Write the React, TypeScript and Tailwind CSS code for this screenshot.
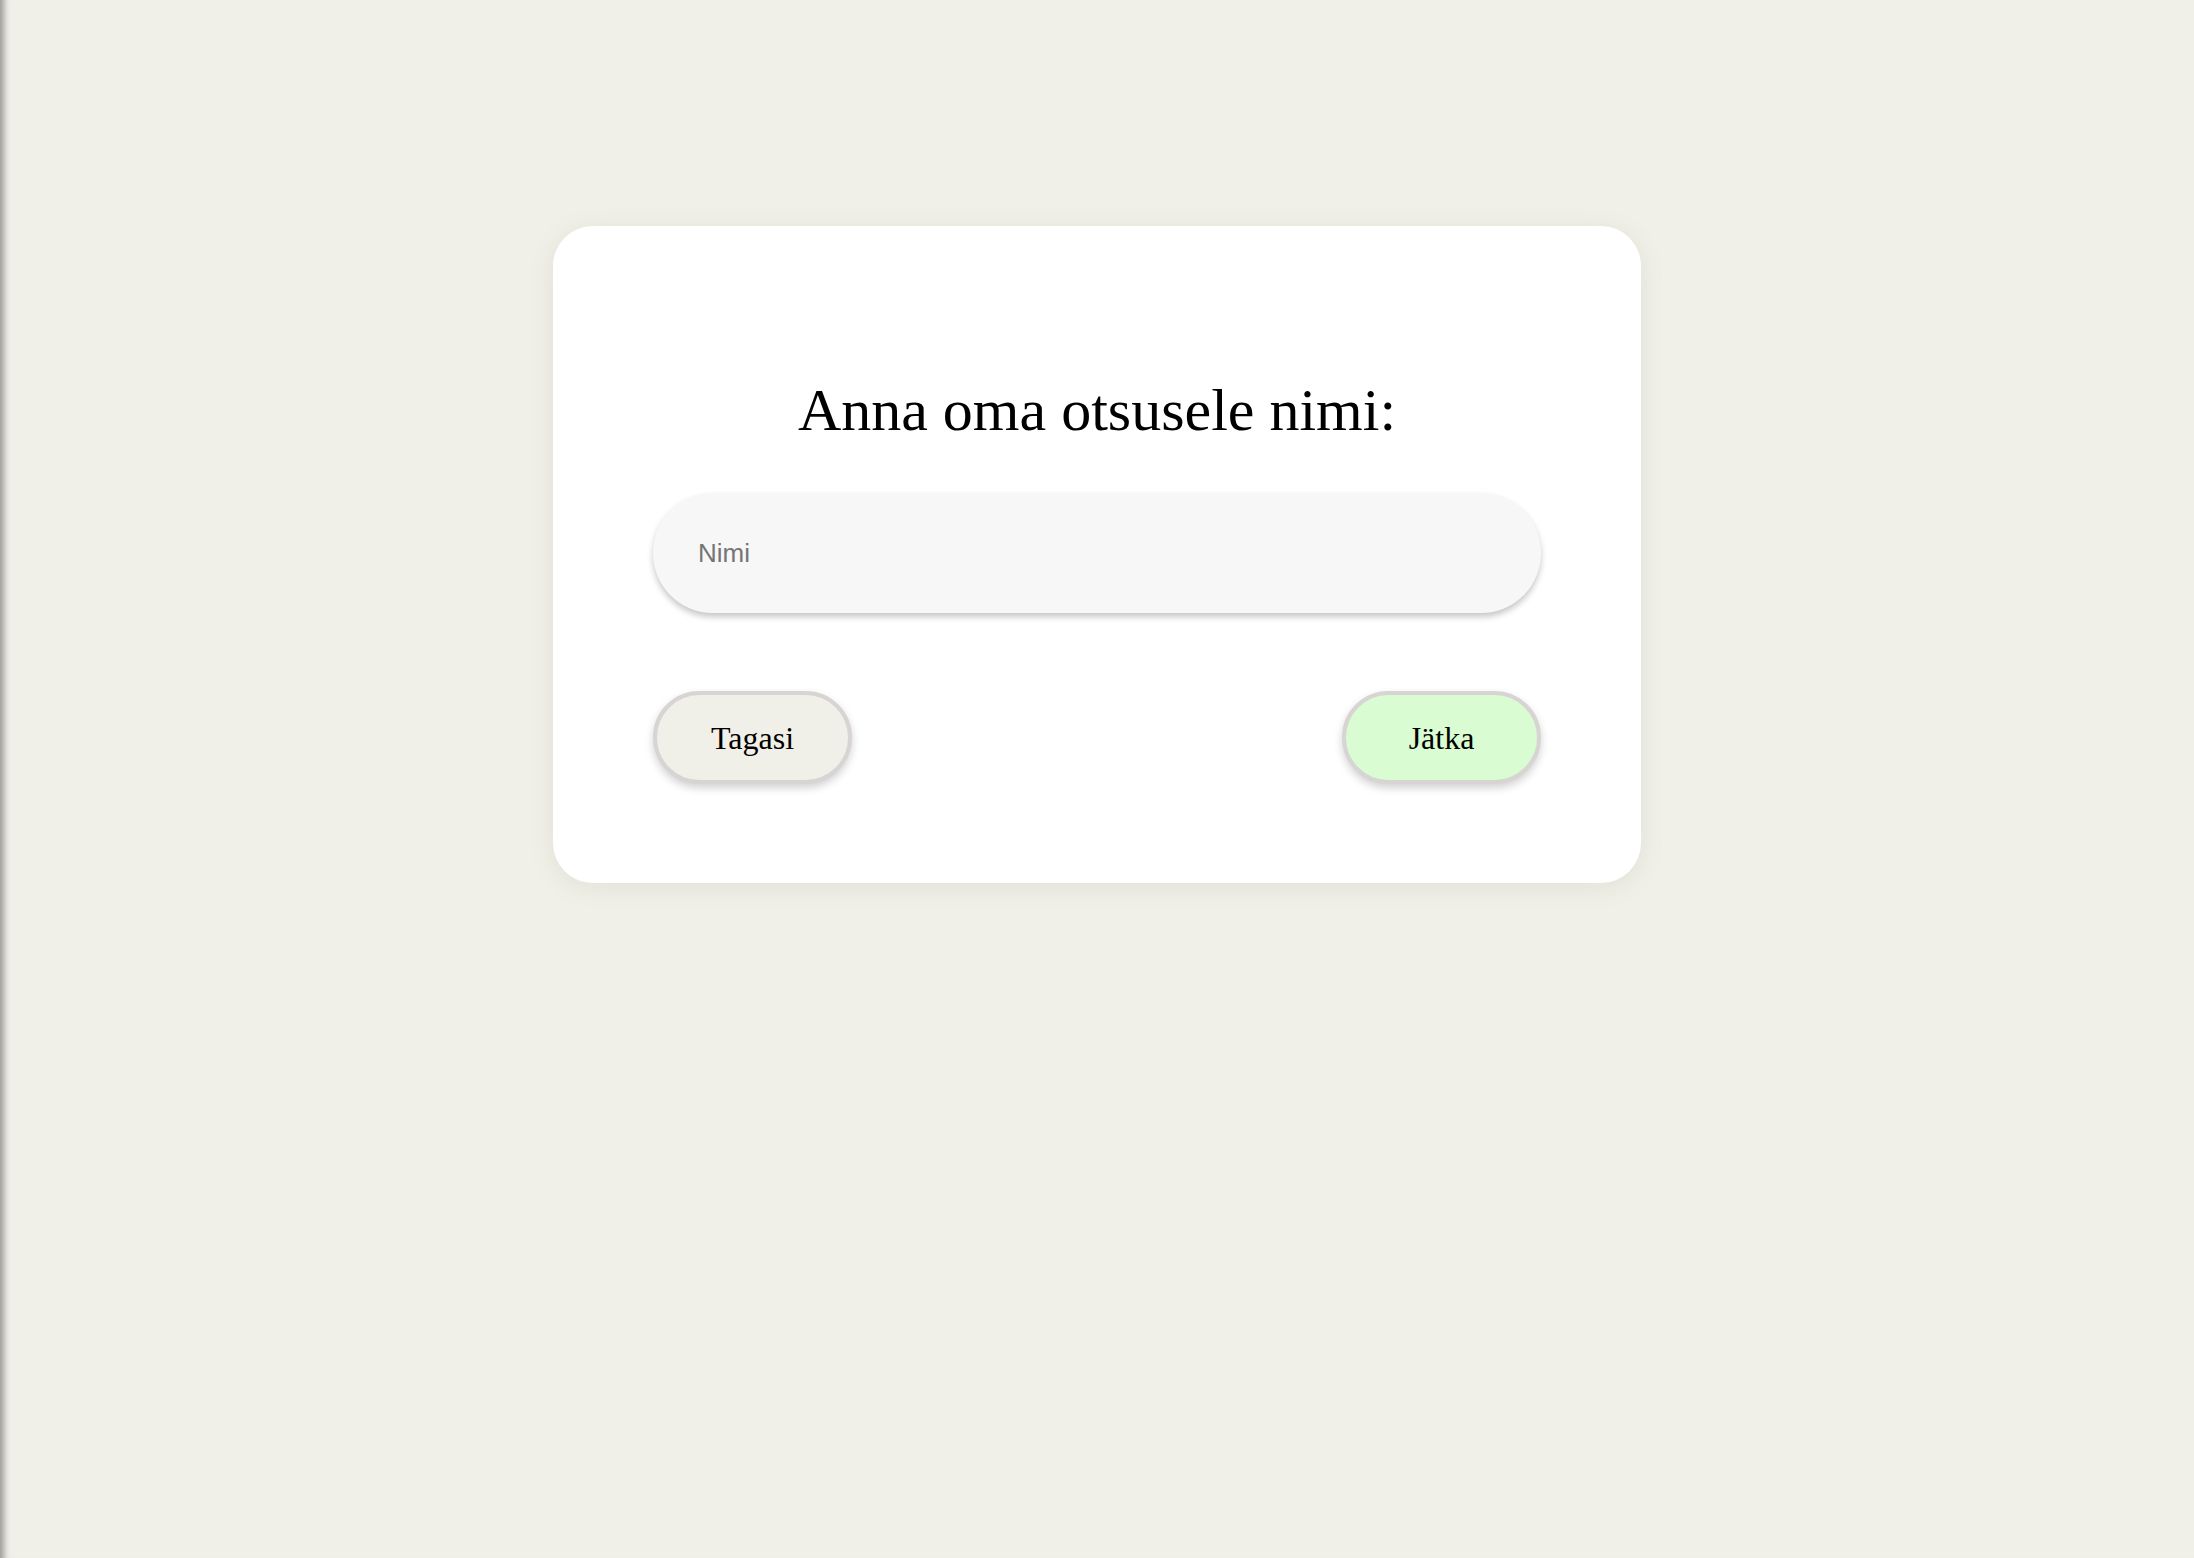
import { useState } from "react";

export default function App() {
  const [name, setName] = useState("");

  return (
    <main className="min-h-screen w-full bg-[#f0f0e8] shadow-[inset_10px_0_6px_-6px_rgba(0,0,0,0.35)] pt-[226px] flex justify-center items-start font-['Liberation_Serif',serif]">
      <section className="w-[1088px] h-[657px] bg-white rounded-[40px] shadow-[0_4px_24px_rgba(120,120,100,0.12)] px-[100px] pt-[151px] flex flex-col">
        <h1 className="text-[60px] leading-[66px] text-black text-center font-normal">
          Anna oma otsusele nimi:
        </h1>

        <input
          type="text"
          value={name}
          onChange={(e) => setName(e.target.value)}
          placeholder="Nimi"
          className="mt-[50px] h-[120px] w-full rounded-full bg-[#f7f7f7] pl-[45px] pr-8 text-[26px] font-['Liberation_Sans',Arial,sans-serif] text-black placeholder:text-[#757575] outline-none shadow-[0_4px_6px_rgba(0,0,0,0.22)]"
        />

        <div className="mt-[78px] flex items-center justify-between">
          <button className="w-[199px] h-[93px] rounded-full border-4 border-[#d8d4d4] bg-[#f0efe8] text-[32px] text-black font-['Liberation_Serif',serif] shadow-[0_4px_8px_rgba(0,0,0,0.18)]">
            Tagasi
          </button>
          <button className="w-[199px] h-[93px] rounded-full border-4 border-[#d8d4d4] bg-[#d9fcd3] text-[32px] text-black font-['Liberation_Serif',serif] shadow-[0_4px_8px_rgba(0,0,0,0.18)]">
            Jätka
          </button>
        </div>
      </section>
    </main>
  );
}
